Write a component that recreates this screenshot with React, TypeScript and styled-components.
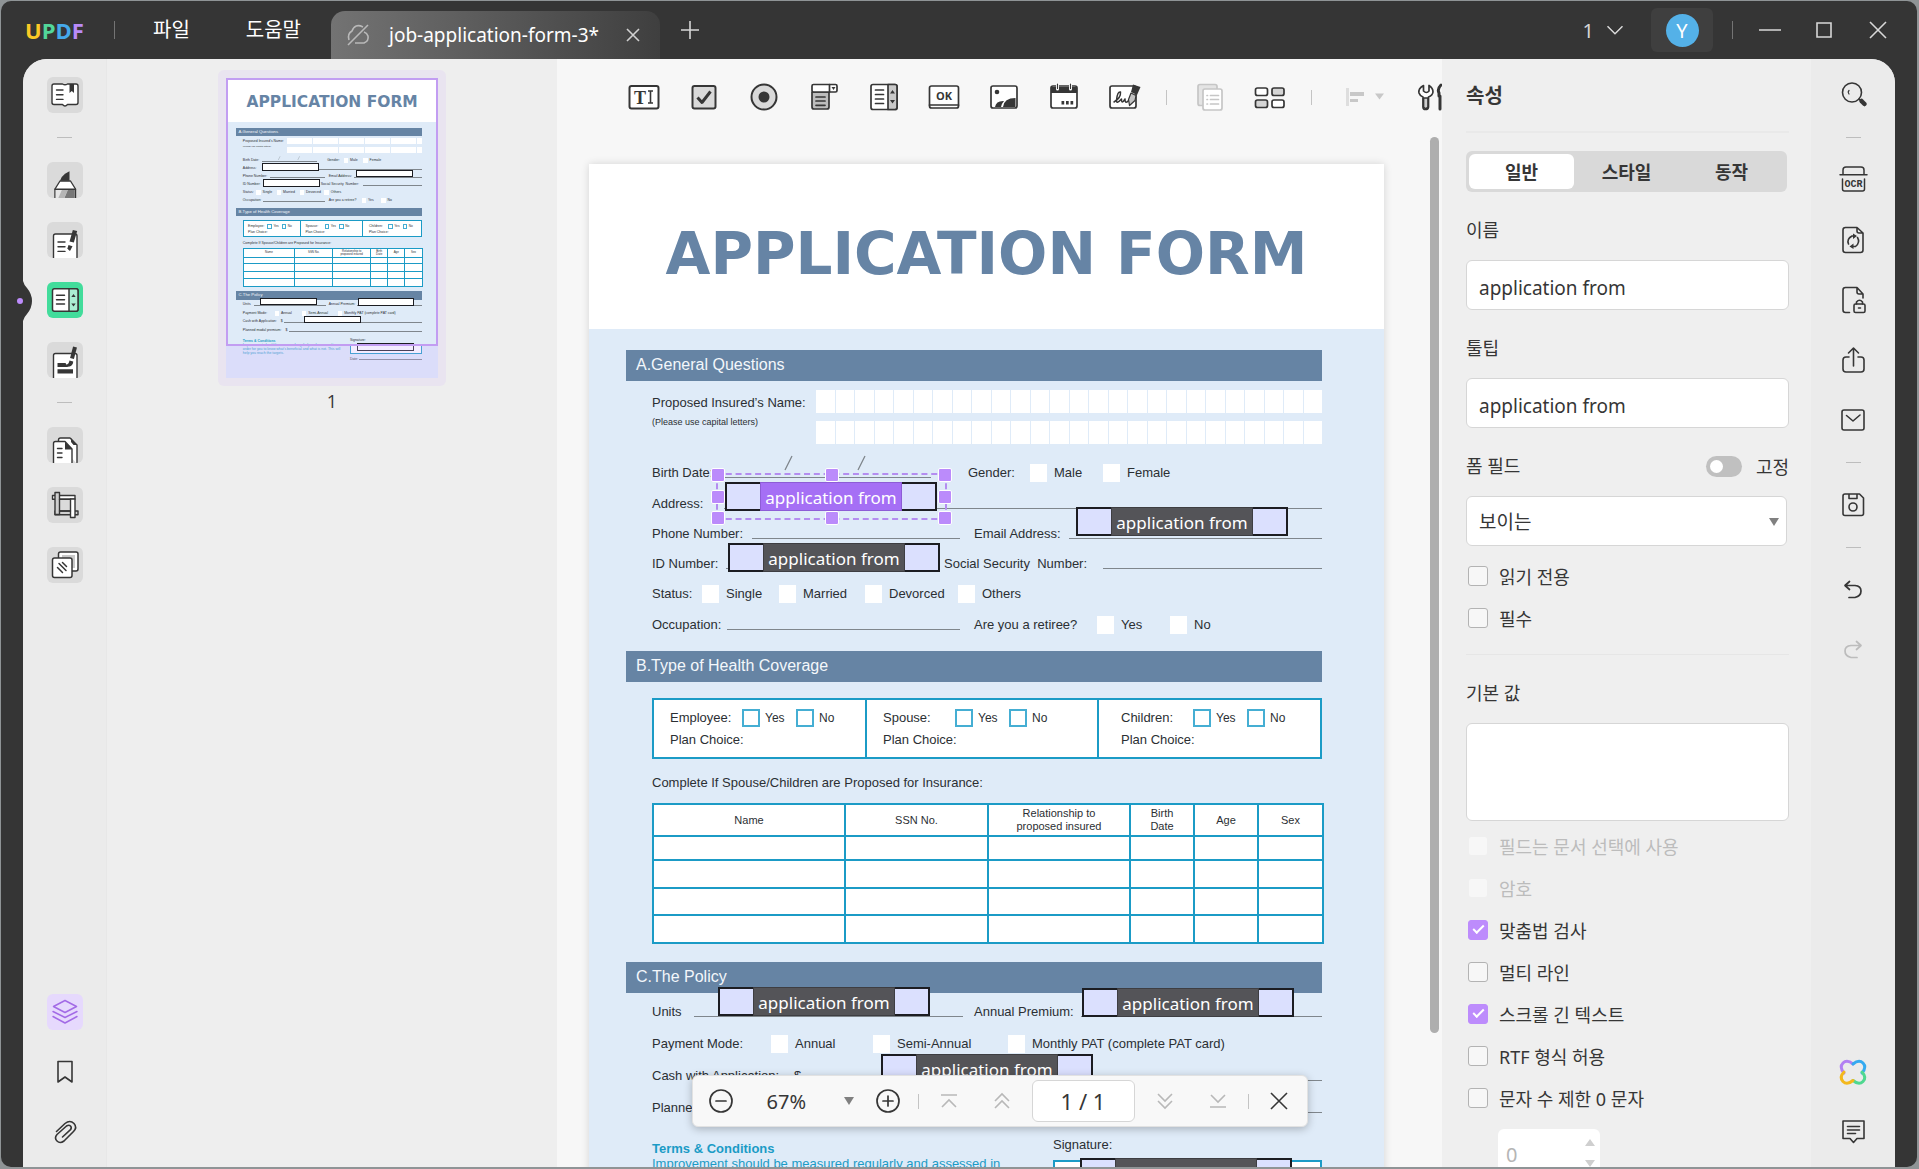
import React from 'react';
import styled, { createGlobalStyle, css } from 'styled-components';

const ui = `"Noto Sans", "Noto Sans CJK KR", sans-serif`;
const paper = `"Liberation Sans", Arial, sans-serif`;
const ink = '#363636';
const cyan = '#1b9bc6';

const Global = createGlobalStyle`
  *, *::before, *::after { box-sizing: border-box; }
  body { margin: 0; background: #8f9496; font-family: ${ui}; color: ${ink}; overflow: hidden; }
  button, input, select, textarea { font: inherit; color: inherit; margin: 0; }
  button { border: 0; padding: 0; background: none; }
  svg { display: block; flex: none; }
`;

/* ---------- shell ---------- */
const Desktop = styled.div`
  height: 100vh;
  padding: 1px 2px 2px 1px;
`;
const Window = styled.div`
  height: 100%;
  display: flex;
  flex-direction: column;
  background: #353535;
  border-radius: 10px;
  overflow: hidden;
`;
const TitleBar = styled.header`
  height: 58px;
  flex: none;
  display: flex;
  align-items: center;
  color: #fff;
  padding-right: 21px;
`;
const Logo = styled.div`
  width: 113px;
  padding-left: 24px;
  font: 700 22px/28px "Open Sans", sans-serif;
`;
const LogoLetter = styled.span<{ $c: string }>`
  color: ${p => p.$c};
`;
const TitleRule = styled.span`
  width: 1px;
  height: 18px;
  background: #747474;
`;
const Menus = styled.nav`
  display: flex;
  gap: 56px;
  padding-left: 38px;
  width: 216px;
`;
const MenuButton = styled.button`
  font-size: 20px;
  line-height: 28px;
  white-space: nowrap;
`;
const Tab = styled.div`
  align-self: flex-end;
  width: 329px;
  height: 48px;
  display: flex;
  align-items: center;
  padding: 0 15px;
  border-radius: 14px 14px 0 0;
  background: linear-gradient(90deg, #737373, #3f3f3f);
`;
const TabName = styled.span`
  flex: 1;
  padding-left: 19px;
  font-size: 19px;
  line-height: 26px;
  white-space: nowrap;
`;
const IconButton = styled.button<{ $w?: number }>`
  width: ${p => p.$w ?? 36}px;
  height: 36px;
  flex: none;
  display: grid;
  place-items: center;
`;
const TabClose = styled(IconButton)`
  width: 24px;
  height: 24px;
`;
const Spacer = styled.div`
  flex: 1;
`;
const Count = styled.button`
  display: flex;
  align-items: center;
  gap: 12px;
  font-size: 20px;
  color: #d5d5d5;
  margin-right: 27px;
`;
const Account = styled.button`
  width: 62px;
  height: 44px;
  border-radius: 6px;
  display: grid;
  place-items: center;
  background: #3f3f3f;
  margin-right: 19px;
`;
const Avatar = styled.span`
  width: 33px;
  height: 33px;
  border-radius: 50%;
  background: #54b1e8;
  font-size: 20px;
  line-height: 33px;
  color: #fff;
`;
const WindowButtons = styled.div`
  display: flex;
  gap: 18px;
  padding-left: 19px;
`;
const Frame = styled.div`
  flex: 1;
  min-height: 0;
  padding: 0 22px;
  position: relative;
`;
const Notch = styled.svg`
  position: absolute;
  left: 16px;
  top: 220px;
`;
const Body = styled.main`
  height: 100%;
  display: flex;
  background: #ebebeb;
  border-radius: 24px 24px 0 0;
  overflow: hidden;
`;

/* ---------- rails ---------- */
const Rail = styled.aside`
  width: 84px;
  flex: none;
  display: flex;
  flex-direction: column;
  align-items: center;
  gap: 24px;
  padding: 18px 0 17px;
  background: #ebebeb;
`;
const LeftRail = styled(Rail)`
  border-right: 1px solid #e7e7e7;
`;
const RailRule = styled.span`
  width: 15px;
  height: 1px;
  background: #bdbdbd;
`;
const tones = { grey: '#dadada', green: '#42dc9b', violet: '#e6d9fd', none: 'transparent' };
const RailButton = styled.button<{ $tone: keyof typeof tones }>`
  width: 36px;
  height: 36px;
  flex: none;
  border-radius: 6px;
  overflow: hidden;
  background: ${p => tones[p.$tone]};
`;

/* ---------- thumbnails ---------- */
const Thumbs = styled.aside`
  width: 450px;
  flex: none;
  background: #eeeeee;
  display: flex;
  flex-direction: column;
  align-items: center;
  padding-top: 11px;
`;
const ThumbCard = styled.div`
  padding: 8px;
  background: #e9e4f0;
  border-radius: 6px;
`;
const ThumbPage = styled.div`
  position: relative;
  width: 212px;
  height: 300px;
  overflow: hidden;
`;
const Shrunk = styled.div`
  zoom: 0.267;
`;
const ViewFrame = styled.div`
  position: absolute;
  inset: 0 0 32px 0;
  border: 2px solid #c29df2;
`;
const ViewShade = styled.div`
  position: absolute;
  inset: auto 0 0 0;
  height: 32px;
  background: rgba(208, 180, 255, 0.25);
`;
const ThumbNumber = styled.div`
  font: 18px/26px "Open Sans", sans-serif;
  margin-top: 2px;
`;

/* ---------- canvas ---------- */
const Canvas = styled.section`
  position: relative;
  flex: 1;
  min-width: 0;
  display: flex;
  flex-direction: column;
  background: #f7f7f7;
  overflow: hidden;
`;
const Toolbar = styled.div`
  height: 76px;
  flex: none;
  display: flex;
  align-items: center;
  gap: 24px;
  padding-left: 69px;
  overflow: hidden;
`;
const ToolRule = styled.span`
  width: 1px;
  height: 15px;
  flex: none;
  background: #c4c4c4;
`;
const DocArea = styled.div`
  flex: 1;
  min-height: 0;
  display: flex;
  overflow: hidden;
`;
const DocScroll = styled.div`
  flex: 1;
  display: flex;
  justify-content: center;
  padding: 29px 32px 0 18px;
`;
const ScrollTrack = styled.div`
  width: 12px;
  padding-top: 2px;
`;
const ScrollThumb = styled.div`
  width: 9px;
  height: 87%;
  border-radius: 5px;
  background: #aeaeae;
`;

/* ---------- document ---------- */
const Sheet = styled.article<{ $mini?: boolean }>`
  position: relative;
  width: 795px;
  height: 1125px;
  flex: none;
  background: #dfebf8;
  font: 13px/18px ${paper};
  color: #2b2f33;
  box-shadow: ${p => (p.$mini ? 'none' : '0 0 8px rgba(0, 0, 0, 0.14)')};
`;
const SheetTitle = styled.h1`
  margin: 0;
  height: 165px;
  background: #fff;
  color: #6684a5;
  text-align: center;
  font: 700 58px/180px "DejaVu Sans", sans-serif;
  white-space: nowrap;
`;
const SheetBody = styled.div`
  padding: 21px 62px 0 37px;
`;
const Band = styled.h2`
  margin: 0;
  height: 31px;
  padding-left: 10px;
  background: #6684a4;
  color: #f3f7fb;
  font: 16px/30px ${paper};
`;
const Block = styled.div<{ $top: number; $bottom?: number }>`
  padding: ${p => p.$top}px 0 ${p => p.$bottom ?? 0}px 26px;
`;
const NameBlock = styled.div`
  display: grid;
  grid-template-columns: 164px 1fr;
  margin-bottom: 13px;
`;
const NameLabel = styled.div`
  padding-top: 4px;
`;
const Hint = styled.div`
  font-size: 9px;
  line-height: 20px;
`;
const Combs = styled.div`
  display: grid;
  gap: 8px;
`;
const Comb = styled.div`
  display: flex;
  gap: 1px;
  height: 23px;
`;
const CombCell = styled.span`
  flex: 1;
  background: #fff;
`;
const Line = styled.div<{ $h?: number }>`
  display: flex;
  align-items: center;
  height: ${p => p.$h ?? 31}px;
`;
const Txt = styled.span<{ $w?: number; $small?: boolean }>`
  ${p => p.$w && css`width: ${p.$w}px;`}
  ${p => p.$small && css`font-size: 12px;`}
  flex: none;
  white-space: pre;
`;
const Blank = styled.span<{ $w?: number; $after?: number }>`
  ${p => (p.$w ? css`width: ${p.$w}px;` : css`flex: 1;`)}
  position: relative;
  height: 10px;
  margin-right: ${p => p.$after ?? 0}px;
  border-bottom: 1px solid #7f868c;
`;
const Slashes = styled.svg`
  position: absolute;
  left: 60px;
  top: -13px;
`;
const Box = styled.span`
  width: 17px;
  height: 18px;
  margin-right: 7px;
  background: #fff;
`;
const CyanBox = styled.span`
  width: 18px;
  height: 18px;
  margin-right: 5px;
  border: 2px solid #45aed3;
`;
const Coverage = styled.div`
  display: grid;
  grid-template-columns: 211px 232px 1fr;
  height: 61px;
  border: 2px solid ${cyan};
  background: #fff;
`;
const CoverCell = styled.div`
  padding: 7px 0 0 16px;
  & + & { border-left: 2px solid ${cyan}; }
  & + & + & { padding-left: 22px; }
`;
const Prompt = styled.p`
  margin: 15px 0 11px;
`;
const People = styled.table`
  width: 100%;
  table-layout: fixed;
  border-collapse: collapse;
  background: #fff;
  font-size: 11px;
  line-height: 13px;
  th, td { border: 2px solid ${cyan}; padding: 0; font-weight: 400; }
`;
const Col = styled.col<{ $w: number }>`
  width: ${p => p.$w}px;
`;
const Tr = styled.tr<{ $h: number }>`
  height: ${p => p.$h}px;
`;
const Closing = styled.div`
  display: grid;
  grid-template-columns: 401px 1fr;
`;
const Terms = styled.div`
  padding: 17px 20px 0 0;
  line-height: 15px;
  color: ${cyan};
`;
const SignCol = styled.div`
  padding-top: 12px;
`;
const SignBox = styled.div`
  height: 36px;
  margin: 6px 0 4px;
  border: 2px solid ${cyan};
  background: #fff;
`;

/* form fields sit anywhere on the sheet */
const FieldShell = styled.button<{ $x: number; $y: number; $mini?: boolean }>`
  position: absolute;
  left: ${p => p.$x}px;
  top: ${p => p.$y}px;
  width: 212px;
  height: 29px;
  display: flex;
  justify-content: center;
  border: 2px solid #1c1d22;
  background: ${p => (p.$mini ? '#fff' : '#dbe0fe')};
`;
const FieldName = styled.span<{ $on?: boolean }>`
  width: 142px;
  height: 29px;
  margin-top: -2px;
  background: ${p => (p.$on ? '#a56ff5' : '#545458')};
  border: 1px solid ${p => (p.$on ? '#8d5cd6' : '#3e3e42')};
  color: #fff;
  font: 17px/29px ${ui};
  overflow: hidden;
  white-space: nowrap;
`;
const Selection = styled.div`
  position: absolute;
  left: 127px;
  top: 309px;
  width: 231px;
  height: 47px;
  border: 2px dashed #b48df0;
`;
const Handle = styled.i<{ $c: number; $r: number }>`
  position: absolute;
  left: ${p => p.$c * 50}%;
  top: ${p => p.$r * 50}%;
  width: 14px;
  height: 14px;
  margin: -7px;
  border: 1px solid #fff;
  border-radius: 2px;
  background: #bb8bfb;
`;

/* ---------- zoom bar ---------- */
const ZoomBar = styled.div`
  position: absolute;
  left: 50%;
  bottom: 40px;
  transform: translateX(-50%);
  width: 616px;
  height: 52px;
  display: flex;
  align-items: center;
  gap: 12px;
  padding: 0 10px;
  border-radius: 6px;
  border: 1px solid #e2e2e2;
  background: #f8f8f8;
  box-shadow: 0 2px 8px rgba(0, 0, 0, 0.25);
`;
const ZoomValue = styled.button`
  display: flex;
  align-items: center;
  justify-content: space-between;
  width: 87px;
  margin: 0 4px 0 16px;
  font-size: 20px;
`;
const NavPair = styled.div`
  display: flex;
  gap: 17px;
`;
const PageInput = styled.input`
  width: 103px;
  height: 42px;
  border: 1px solid #d6d6d6;
  border-radius: 6px;
  background: #fff;
  text-align: center;
  font-size: 22px;
`;

/* ---------- properties ---------- */
const Props = styled.aside`
  width: 369px;
  flex: none;
  padding: 0 22px 0 24px;
  background: #efefef;
  overflow: hidden;
`;
const PropsTitle = styled.h2`
  margin: 0;
  height: 74px;
  border-bottom: 2px solid #e9e9e9;
  font: 700 20px/74px ${ui};
`;
const Segments = styled.div`
  display: flex;
  margin: 18px 2px 0 0;
  padding: 3px;
  height: 41px;
  border-radius: 6px;
  background: #d9d9d9;
`;
const Segment = styled.button<{ $on?: boolean }>`
  flex: 1;
  border-radius: 6px;
  background: ${p => (p.$on ? '#fff' : 'transparent')};
  font-size: 18px;
  line-height: 30px;
  font-weight: 700;
`;
const Field = styled.div`
  margin-top: 25px;
`;
const FieldHead = styled.div`
  display: flex;
  align-items: center;
  justify-content: space-between;
  height: 26px;
  margin-bottom: 17px;
`;
const Label = styled.label`
  font-size: 18px;
  line-height: 26px;
`;
const control = css`
  width: 100%;
  border: 1px solid #d6d6d6;
  border-radius: 6px;
  background: #fff;
  padding: 6px 12px 0;
  font-size: 19px;
  display: block;
  outline: none;
`;
const Input = styled.input`
  ${control}
  height: 50px;
`;
const Area = styled.textarea`
  ${control}
  height: 98px;
  resize: none;
`;
const SelectWrap = styled.div`
  position: relative;
  margin-right: 2px;
`;
const Select = styled.select`
  ${control}
  height: 50px;
  appearance: none;
  padding-top: 2px;
`;
const SelectArrow = styled.svg`
  position: absolute;
  right: 8px;
  top: 22px;
`;
const SwitchLabel = styled.label`
  display: flex;
  align-items: center;
  gap: 14px;
  font-size: 18px;
`;
const Switch = styled.input`
  appearance: none;
  width: 36px;
  height: 21px;
  border-radius: 11px;
  background: #c0c0c0;
  padding: 4px;
  &::after {
    content: '';
    display: block;
    width: 13px;
    height: 13px;
    border-radius: 50%;
    background: #fff;
  }
`;
const Checks = styled.div<{ $top: number }>`
  padding: ${p => p.$top}px 0 0 2px;
`;
const CheckRow = styled.label<{ $off?: boolean }>`
  display: flex;
  align-items: center;
  gap: 11px;
  height: 42px;
  font-size: 18px;
  white-space: nowrap;
  color: ${p => (p.$off ? '#bcbcbc' : ink)};
`;
const Check = styled.input`
  appearance: none;
  width: 20px;
  height: 20px;
  flex: none;
  display: grid;
  place-items: center;
  border: 1px solid #b3b3b3;
  border-radius: 3px;
  background: #f7f7f7;
  &:disabled { border-color: #efefef; }
  &:checked { background: #bd8cfc; border-color: #bd8cfc; }
  &:checked::after {
    content: '';
    width: 11px;
    height: 6px;
    margin-bottom: 4px;
    border: solid #fff;
    border-width: 0 0 2px 2px;
    transform: rotate(-45deg);
  }
`;
const PropsRule = styled.hr`
  margin: 15px 0 0;
  border: 0;
  border-top: 1px solid #e6e6e6;
`;
const Stepper = styled.div`
  position: relative;
  width: 102px;
  margin: 10px 0 0 32px;
`;
const StepInput = styled.input`
  width: 102px;
  height: 50px;
  border: 0;
  border-radius: 6px;
  padding: 0 8px;
  background: #fff;
  color: #b5b5b5;
  font-size: 20px;
  appearance: textfield;
  &::-webkit-inner-spin-button { display: none; }
`;
const StepArrows = styled.svg`
  position: absolute;
  right: 5px;
  top: 10px;
`;

/* ---------- icons: every one is drawn on a 36px grid ---------- */
const Icon = ({ children, c = ink, w = 2 }: { children: React.ReactNode; c?: string; w?: number }) => (
  <svg width="36" height="36" viewBox="0 0 36 36" fill="none" stroke={c} strokeWidth={w} strokeLinejoin="round" strokeLinecap="round" aria-hidden="true">
    {children}
  </svg>
);
const solid = { fill: ink, stroke: 'none' };

const Reader = () => (
  <Icon w={1.4}>
    <path d="M7 7h8.500q2.500 1.500 5 0H29q2 0 2 2v16.500q0 2-2 2h-8.500q-2.500 3-5 0H7q-2 0-2-2V9q0-2 2-2z" fill="#fff" />
    <path d="M9.500 13h6.500M9.500 17.700h6.500M9.500 22.400h6.500" />
    <path d="M22.500 7h4.500v9l-2.200-2-2.300 2z" {...solid} />
  </Icon>
);
const Marker = () => (
  <Icon w={1.4}>
    <path d="M8 36v-9l5-8h10.500l5 8v9" fill="#fff" />
    <path d="M8.700 27.500h6.300l-4 9H8.700z" fill="#e6e6e6" stroke="none" />
    <path d="M15 27.500h6l-4 9h-6z" fill="#b5b5b5" stroke="none" />
    <path d="M21 27.500h6.800V37H17z" fill="#777" stroke="none" />
    <path d="M8 27.200h20.500" />
    <path d="M13 18.800q1.500-4.500 5-7L22.500 9.300v9.500z" {...solid} />
  </Icon>
);
const EditPage = () => (
  <Icon w={1.4}>
    <path d="M6.500 37V14q0-2 2-2H28q2 0 2 2v23" fill="#fff" />
    <path d="M11 20h7M11 24.700h7M11 29.400h7" />
    <path d="M28 8.500L24.700 20" strokeWidth="4.500" strokeLinecap="butt" />
    <path d="M21.500 23l4 1.200-2.500 4.800q-2-1-2.500-2.800z" {...solid} />
  </Icon>
);
const FormPage = () => (
  <Icon w={1.5}>
    <rect x="5.500" y="6.700" width="25.500" height="22.600" rx="2" fill="#fff" />
    <path d="M22 6.700h7q2 0 2 2v18.600q0 2-2 2h-7z" fill="#abeed3" />
    <path d="M9.500 13.300h8M9.500 17.700h8M9.500 22h8" />
    <path d="M24.300 15l2.200-3 2.200 3zM24.300 21.500l2.200 3 2.200-3z" {...solid} />
  </Icon>
);
const Redact = () => (
  <Icon w={1.4}>
    <path d="M6.500 37V13.500q0-2 2-2H28q2 0 2 2v23" fill="#fff" />
    <path d="M10.500 21h8q1 3 4 4h-12zM10.500 27.200h15.500v4.300H10.500z" {...solid} />
    <path d="M28 5l-3 11.500" strokeWidth="4" strokeLinecap="butt" />
    <path d="M22.500 18.500l3.700 1q0 3.500-3.500 5-2.500 0-3.700-1.500 3-1 3.500-4.500z" {...solid} />
  </Icon>
);
const Pages = () => (
  <Icon w={1.4}>
    <path d="M11.500 16v-3q0-2 2-2h9.500l7 7v19" fill="#fff" />
    <path d="M6.500 37V16.500q0-2 2-2H18l7 7.500v15" fill="#fff" />
    <path d="M18 14.500l7 8h-7zM24 11l6 7h-3.500L24 15z" {...solid} />
    <path d="M10.500 21.500h4.500M10.500 26h4.500M10.500 30.500h4.500" />
  </Icon>
);
const CropPage = () => (
  <Icon w={1.4}>
    <path d="M5.500 8.500h22.500v3.700H5.500z" fill="#fff" />
    <path d="M8 24h23v3.700H8z" fill="#cfcfcf" />
    <path d="M23.500 12h4.500v18.500h-4.500z" fill="#fff" />
    <path d="M8 5.500h4.500v22H8z" fill="#cfcfcf" />
    <path d="M12.500 12.200h11M12.500 24h11" />
  </Icon>
);
const Compare = () => (
  <Icon w={1.5}>
    <rect x="11.500" y="5" width="19.500" height="19" rx="2" fill="#fff" />
    <rect x="15" y="8" width="13" height="13" fill="#c9c9c9" stroke="none" />
    <rect x="5.500" y="11" width="19.500" height="19.500" rx="2" fill="#fff" />
    <path d="M10.500 20.500l5 5M12 16.500l7 7M15.500 15.500l4 4" />
  </Icon>
);
const Layers = () => (
  <Icon w={1.5} c="#a36be6">
    <path d="M18 6.500l11.500 6L18 18.500 6.500 12.500zM6 17.500l12 6 12-6M6 22.500l12 6.500 12-6.500" />
  </Icon>
);
const Bookmark = () => <Icon w={1.6}><path d="M11 7.500h14v20.500l-7-5-7 5z" /></Icon>;
const Clip = () => (
  <Icon w={1.6}>
    <path d="M9.500 17.500l8.500-8q5-4 9 0 3.500 4-.5 8L17 27q-4 3-7 0t0-6.500L19.500 12q2.500-1.500 4 0t0 3.700L15.500 23" />
  </Icon>
);
const leftTop: [string, () => React.ReactElement, keyof typeof tones][] = [
  ['주석', Marker, 'grey'], ['편집', EditPage, 'grey'], ['양식', FormPage, 'green'], ['가리기', Redact, 'grey'],
];
const leftMid: [string, () => React.ReactElement][] = [['페이지 구성', Pages], ['페이지 자르기', CropPage], ['비교', Compare]];

const SearchIcon = () => (
  <Icon w={1.6}>
    <circle cx="17" cy="15.500" r="9.500" />
    <path d="M14 13.500q-1.500 1.500 0 3.500" strokeWidth="1.200" />
    <path d="M24 22l2 2" /><path d="M26.500 24l3 3" strokeWidth="4.500" />
  </Icon>
);
const OcrText = styled.text`
  font: 700 10px "Liberation Mono", monospace;
`;
const Ocr = () => (
  <Icon w={1.5}>
    <path d="M8 12.500V8q0-3 3-3h15q3 0 3 3v4.500M5 12.700h27M7.500 17v10q0 2 2 2h18q2 0 2-2V17" />
    <OcrText x="18.500" y="25" textAnchor="middle" fill={ink} stroke="none">OCR</OcrText>
  </Icon>
);
const Convert = () => (
  <Icon w={1.6}>
    <path d="M22 5.500H10.500Q8 5.500 8 8v20q0 2.500 2.500 2.500h15q2.500 0 2.500-2.500V11zM22 5.500V9q0 2 2 2h4" />
    <path d="M13.500 22q-2-5 3.500-8h2M22.500 15.500q3 5-2 9h-3" />
    <path d="M18 11.500l4 2.500-4 3zM18.500 21.500l-4 3 4 2.500z" {...solid} />
  </Icon>
);
const Lock = () => (
  <Icon w={1.6}>
    <path d="M14.500 30.500h-4Q8 30.500 8 28V8q0-2.500 2.500-2.500H22l6 6.500v4M22 5.500V10q0 2 2 2h4" />
    <rect x="19" y="22" width="11" height="8.500" rx="1.500" />
    <path d="M21.500 22v-2q3-3.500 6 0v2M23.500 26h2" />
  </Icon>
);
const Share = () => (
  <Icon w={1.6}>
    <path d="M14 15h-3q-3 0-3 3v9q0 3 3 3h15q3 0 3-3v-9q0-3-3-3h-3M18.500 24V6.500M13.500 11l5-5 5 5" />
  </Icon>
);
const Mail = () => <Icon w={1.6}><rect x="7" y="8" width="22" height="20" rx="2" /><path d="M11.500 13.500l6.500 5.500 7-6" /></Icon>;
const Save = () => (
  <Icon w={1.6}>
    <path d="M10 7h14.500l4 4v15.500q0 2-2 2H10q-2 0-2-2V9q0-2 2-2zM14 7v4.500h8V7" /><circle cx="18" cy="20" r="4" />
  </Icon>
);
const Undo = () => <Icon w={1.7}><path d="M14.500 9.500L10 13.500l4.500 4M10.500 13.500H20q6 .5 6 5.500t-6 6.500h-6" /></Icon>;
const Redo = () => <Icon w={1.7} c="#bcbcbc"><path d="M21.500 9.500l4.500 4-4.500 4M25.500 13.500H16q-6 .5-6 5.500t6 6.500h6" /></Icon>;
const Clover = () => (
  <Icon w={3}>
    <path d="M9 19Q4 13 8 9q4-4 10 1" stroke="#b280f2" />
    <path d="M18 10q6-5 10-1 4 4-1 10" stroke="#35aaf0" />
    <path d="M27 18q5 5.500 1 9.500-4 4-10-1" stroke="#4fd890" />
    <path d="M18 26.500q-6 5-10 1Q4 23 9 18" stroke="#f3b81d" />
  </Icon>
);
const Comment = () => <Icon w={1.6}><path d="M8 7h21v17.500h-7l-3.500 4-3.500-4H8zM12.500 12.500h12M12.500 16h12M12.500 19.500h8" /></Icon>;

/* toolbar icons */
const Glyph = styled.text<{ $serif?: boolean }>`
  font: 700 ${p => (p.$serif ? '18px "Liberation Serif", serif' : '11px "Open Sans", sans-serif')};
`;
const TextTool = () => (
  <Icon><rect x="3.500" y="7" width="29" height="22.500" rx="2" fill="#fff" />
    <Glyph $serif x="14" y="24.500" textAnchor="middle" fill={ink} stroke="none">T</Glyph>
    <path d="M24.500 12.500v11M22 12h5M22 24h5" strokeWidth="1.600" strokeLinecap="butt" />
  </Icon>
);
const CheckTool = () => <Icon><rect x="6.500" y="7" width="23" height="22.500" rx="2" fill="#d9d9d9" /><path d="M11.500 18.500l4.500 5 8.500-11" strokeWidth="3" strokeLinecap="butt" /></Icon>;
const RadioTool = () => <Icon><circle cx="18" cy="18" r="12.500" fill="#d9d9d9" /><circle cx="18" cy="18" r="5.500" {...solid} /></Icon>;
const ComboTool = () => (
  <Icon w={1.7}><path d="M6 13h17v15q0 2-2 2H8q-2 0-2-2z" fill="#bdbdbd" />
    <rect x="6" y="5.500" width="25" height="7.500" rx="1.500" fill="#fff" /><path d="M23.500 5.500v7.500M10 18h9M10 22h9M10 26.300h9" />
    <path d="M25.500 8h4l-2 3z" {...solid} />
  </Icon>
);
const ListTool = () => (
  <Icon w={1.7}><rect x="5" y="5.500" width="26" height="25" rx="2" fill="#fff" /><path d="M22 5.500h7q2 0 2 2v21q0 2-2 2h-7z" fill="#c9c9c9" />
    <path d="M9.500 11h8M9.500 15.500h8M9.500 20h8M9.500 24.500h8" /><path d="M24 14.500l2.500-3.500 2.500 3.500zM24 21l2.500 3.500L29 21z" {...solid} />
  </Icon>
);
const OkTool = () => (
  <Icon w={1.7}><rect x="3.500" y="7" width="29" height="22" rx="2" fill="#fff" /><path d="M3.500 26h29" />
    <Glyph x="18" y="21" textAnchor="middle" fill={ink} stroke="none">OK</Glyph>
  </Icon>
);
const ImageTool = () => (
  <Icon w={1.7}><rect x="5" y="7" width="26" height="22" rx="2" fill="#fff" /><circle cx="11" cy="13" r="2.300" {...solid} />
    <path d="M9 28q1-6 8-6l1 0q-2 2-3 6zM17 28q1-9 12.500-9v9z" {...solid} />
  </Icon>
);
const DateTool = () => (
  <Icon w={1.7}><rect x="5" y="7" width="26" height="22" rx="2" fill="#fff" /><path d="M5 8h26v6H5z" {...solid} />
    <path d="M11.500 5v5M24.500 5v5" stroke="#fff" strokeWidth="3" /><path d="M11.500 5v4.500M24.500 5v4.500" strokeWidth="1.200" />
    <path d="M15.500 22h2.700v3.500h-2.700zM20 22h2.700v3.500H20zM24.500 22h2.700v3.500h-2.700z" {...solid} />
  </Icon>
);
const SignTool = () => (
  <Icon w={1.7}><rect x="4" y="7" width="26" height="22" rx="2" fill="#fff" />
    <path d="M8 23q7-4 6.500-10-3-1-4 8-.5 5 5-1 0 6 3.500 0 0 6 4 1" strokeWidth="1.500" />
    <path d="M25 14l5 2.500-1 5-5.500 5-1-6z" fill="#c4c4c4" strokeWidth="1.200" /><path d="M27 5.500l7.500 2.500-3.500 8-6-3z" {...solid} />
  </Icon>
);
const CopyTool = () => (
  <Icon w={1.7} c="#c6c6c6"><rect x="7" y="5.500" width="19" height="21" rx="2" fill="#e4e4e4" /><rect x="12" y="10" width="19" height="21" rx="2" fill="#fff" />
    <path d="M19.500 16.500h8M19.500 20.500h8M19.500 25h8M16 16.500h.5M16 20.500h.5M16 25h.5" />
  </Icon>
);
const GridTool = () => (
  <Icon w={1.7}><rect x="4.500" y="9" width="12" height="7.500" rx="2" fill="#fff" /><rect x="21" y="9" width="12" height="7.500" rx="2" fill="#d5d5d5" />
    <rect x="4.500" y="21" width="12" height="7.500" rx="2" fill="#d5d5d5" /><rect x="21" y="21" width="12" height="7.500" rx="2" fill="#fff" />
  </Icon>
);
const AlignTool = () => (
  <svg width="56" height="36" viewBox="0 0 56 36" fill="#c8c8c8" aria-hidden="true">
    <rect x="10" y="9" width="3" height="18" fill="#dedede" /><rect x="14" y="13" width="14" height="4" /><rect x="14" y="20" width="8" height="3" /><path d="M39 14.500h9l-4.500 6z" />
  </svg>
);
const Wrench = () => (
  <Icon w={1.7}><path d="M7.500 6.500Q2 9.500 3 14q1 3 4 4v10q0 2.500 2.500 2.500T12.500 28V18q4-1.500 4.500-5 0-4-4-6.500V12q-2.500 3-5.500 0z" fill="#fff" />
    <path d="M7.500 19h4.500v9q-2 3-4.500 0z" fill="#cfcfcf" /><path d="M25 6q-4 4-2 8v3M24 17v13" strokeWidth="3" />
  </Icon>
);
const tools: [string, () => React.ReactElement][] = [
  ['텍스트 필드', TextTool], ['체크 박스', CheckTool], ['라디오 버튼', RadioTool], ['드롭다운', ComboTool], ['목록 상자', ListTool],
  ['버튼', OkTool], ['이미지', ImageTool], ['날짜', DateTool], ['서명', SignTool],
];

/* ---------- document pieces ---------- */
const fields = [
  { x: 136, y: 318, on: true }, { x: 487, y: 343 }, { x: 139, y: 379 }, { x: 129, y: 823 },
  { x: 493, y: 824 }, { x: 292, y: 890 }, { x: 491, y: 994 },
];
const range = (n: number) => Array.from({ length: n }, (_, i) => i);

const Option = ({ text, w }: { text: string; w?: number }) => (<><Box /><Txt $w={w}>{text}</Txt></>);
const Cover = ({ who }: { who: string }) => (
  <CoverCell>
    <Line $h={22}>
      <Txt $w={72}>{who}</Txt>
      <CyanBox /><Txt $w={31} $small>Yes</Txt>
      <CyanBox /><Txt $small>No</Txt>
    </Line>
    <Line $h={22}><Txt>Plan Choice:</Txt></Line>
  </CoverCell>
);

const Document = ({ mini }: { mini?: boolean }) => (
  <Sheet $mini={mini}>
    <SheetTitle>APPLICATION FORM</SheetTitle>
    <SheetBody>
      <Band>A.General Questions</Band>
      <Block $top={9} $bottom={11}>
        <NameBlock>
          <NameLabel>Proposed Insured’s Name:<Hint>(Please use capital letters)</Hint></NameLabel>
          <Combs>{range(2).map(r => <Comb key={r}>{range(26).map(c => <CombCell key={c} />)}</Comb>)}</Combs>
        </NameBlock>
        <Line>
          <Txt $w={72}>Birth Date:</Txt>
          <Blank $w={207} $after={37}>
            <Slashes width="84" height="16" stroke="#7f868c" strokeWidth="1.300"><path d="M1 15L8 1M74 15L81 1" /></Slashes>
          </Blank>
          <Txt $w={62}>Gender:</Txt><Option text="Male" w={49} /><Option text="Female" />
        </Line>
        <Line><Txt $w={72}>Address:</Txt><Blank /></Line>
        <Line $h={30}><Txt $w={100}>Phone Number:</Txt><Blank $w={208} $after={14} /><Txt $w={95}>Email Address:</Txt><Blank /></Line>
        <Line $h={30}><Txt $w={74}>ID Number:</Txt><Blank $w={210} $after={8} /><Txt $w={159}>{'Social Security  Number:'}</Txt><Blank /></Line>
        <Line $h={30}>
          <Txt $w={50}>Status:</Txt><Option text="Single" w={53} /><Option text="Married" w={62} /><Option text="Devorced" w={69} /><Option text="Others" />
        </Line>
        <Line><Txt $w={75}>Occupation:</Txt><Blank $w={233} $after={14} /><Txt $w={123}>Are you a retiree?</Txt><Option text="Yes" w={49} /><Option text="No" /></Line>
      </Block>
      <Band>B.Type of Health Coverage</Band>
      <Block $top={16} $bottom={18}>
        <Coverage><Cover who="Employee:" /><Cover who="Spouse:" /><Cover who="Children:" /></Coverage>
        <Prompt>Complete If Spouse/Children are Proposed for Insurance:</Prompt>
        <People>
          <colgroup>{[192, 143, 142, 64, 64, 65].map((w, i) => <Col key={i} $w={w} />)}</colgroup>
          <thead>
            <Tr $h={32}><th>Name</th><th>SSN No.</th><th>Relationship to<br />proposed insured</th><th>Birth<br />Date</th><th>Age</th><th>Sex</th></Tr>
          </thead>
          <tbody>{[24, 28, 27, 28].map((h, i) => <Tr key={i} $h={h}>{range(6).map(c => <td key={c} />)}</Tr>)}</tbody>
        </People>
      </Block>
      <Band>C.The Policy</Band>
      <Block $top={3}>
        <Line $h={32}><Txt $w={42}>Units</Txt><Blank $w={269} $after={11} /><Txt $w={107}>Annual Premium:</Txt><Blank /></Line>
        <Line $h={32}><Txt $w={119}>Payment Mode:</Txt><Option text="Annual" w={78} /><Option text="Semi-Annual" w={111} /><Option text="Monthly PAT (complete PAT card)" /></Line>
        <Line $h={32}><Txt $w={142}>Cash with Application:</Txt><Txt $w={12}>$</Txt><Blank /></Line>
        <Line $h={32}><Txt $w={160}>Planned modal premium:</Txt><Txt $w={12}>$</Txt><Blank /></Line>
        <Closing>
          <Terms><b>Terms &amp; Conditions</b><br />Improvement should be measured regularly and assessed in order for you to know what’s beneficial and what is not. This will help you reach the targets.</Terms>
          <SignCol>Signature:<SignBox /><Line><Txt $w={36}>Date:</Txt><Blank /></Line></SignCol>
        </Closing>
      </Block>
    </SheetBody>
    {fields.map((f, i) => (
      <FieldShell key={i} type="button" $x={f.x} $y={f.y} $mini={mini}>
        {!mini && <FieldName $on={f.on}>application from</FieldName>}
      </FieldShell>
    ))}
    {!mini && (
      <Selection>
        {range(9).filter(i => i !== 4).map(i => <Handle key={i} $c={i % 3} $r={Math.floor(i / 3)} />)}
      </Selection>
    )}
  </Sheet>
);

const Tiny = ({ d, c = '#d8d8d8', s = 24, w = 1.6 }: { d: string; c?: string; s?: number; w?: number }) => (
  <svg width={s} height={s} viewBox="0 0 24 24" fill="none" stroke={c} strokeWidth={w} aria-hidden="true"><path d={d} /></svg>
);
const Down = () => <svg width="10" height="8" aria-hidden="true"><path d="M0 0h10L5 8z" fill="#808080" /></svg>;

const options: [string, boolean, boolean][] = [
  ['필드는 문서 선택에 사용', false, true], ['암호', false, true], ['맞춤법 검사', true, false], ['멀티 라인', false, false],
  ['스크롤 긴 텍스트', true, false], ['RTF 형식 허용', false, false], ['문자 수 제한 0 문자', false, false],
];
const CheckOption = ({ text, on, off }: { text: string; on?: boolean; off?: boolean }) => (
  <CheckRow $off={off}><Check type="checkbox" defaultChecked={on} disabled={off} />{text}</CheckRow>
);
const RailItem = ({ name, tone = 'none', icon: I }: { name: string; tone?: keyof typeof tones; icon: () => React.ReactElement }) => (
  <RailButton type="button" aria-label={name} $tone={tone}><I /></RailButton>
);

export default function App() {
  return (
    <Desktop>
      <Global />
      <Window>
        <TitleBar>
          <Logo><LogoLetter $c="#fbc926">U</LogoLetter><LogoLetter $c="#52d69a">P</LogoLetter><LogoLetter $c="#45a9ea">D</LogoLetter><LogoLetter $c="#b98bf8">F</LogoLetter></Logo>
          <TitleRule />
          <Menus>
            <MenuButton type="button">파일</MenuButton>
            <MenuButton type="button">도움말</MenuButton>
          </Menus>
          <Tab>
            <Tiny c="#b9b9b9" d="M2 22L22 2M17 4Q9 0 6 8q-5 3-3 9M9 20h9q5-2 4-7-1-3-4-4" />
            <TabName>job-application-form-3*</TabName>
            <TabClose type="button" aria-label="탭 닫기"><Tiny c="#d0d0d0" d="M6 6l12 12M18 6L6 18" /></TabClose>
          </Tab>
          <IconButton type="button" $w={60} aria-label="새 탭"><Tiny c="#d8d8d8" d="M12 3v18M3 12h18" /></IconButton>
          <Spacer />
          <Count type="button">1<Tiny s={18} w={2} d="M2 7l10 10L22 7" /></Count>
          <Account type="button" aria-label="계정"><Avatar>Y</Avatar></Account>
          <TitleRule />
          <WindowButtons>
            <IconButton type="button" aria-label="최소화"><Tiny d="M1 12h22" /></IconButton>
            <IconButton type="button" aria-label="최대화"><Tiny d="M5 5h14v14H5z" /></IconButton>
            <IconButton type="button" aria-label="닫기"><Tiny d="M4 4l16 16M20 4L4 20" /></IconButton>
          </WindowButtons>
        </TitleBar>
        <Frame>
          <Body>
            <LeftRail>
              <RailItem name="읽기" tone="grey" icon={Reader} />
              <RailRule />
              {leftTop.map(([n, I, t]) => <RailItem key={n} name={n} tone={t} icon={I} />)}
              <RailRule />
              {leftMid.map(([n, I]) => <RailItem key={n} name={n} tone="grey" icon={I} />)}
              <Spacer />
              <RailItem name="축소판" tone="violet" icon={Layers} />
              <RailItem name="책갈피" icon={Bookmark} />
              <RailItem name="첨부 파일" icon={Clip} />
            </LeftRail>
            <Thumbs>
              <ThumbCard>
                <ThumbPage>
                  <Shrunk aria-hidden="true" inert><Document mini /></Shrunk>
                  <ViewShade /><ViewFrame />
                </ThumbPage>
              </ThumbCard>
              <ThumbNumber>1</ThumbNumber>
            </Thumbs>
            <Canvas>
              <Toolbar>
                {tools.map(([n, I]) => <IconButton key={n} type="button" aria-label={n}><I /></IconButton>)}
                <ToolRule />
                <IconButton type="button" aria-label="복사"><CopyTool /></IconButton>
                <IconButton type="button" aria-label="필드 배열"><GridTool /></IconButton>
                <ToolRule />
                <IconButton type="button" $w={56} aria-label="정렬"><AlignTool /></IconButton>
                <IconButton type="button" aria-label="도구"><Wrench /></IconButton>
              </Toolbar>
              <DocArea>
                <DocScroll><Document /></DocScroll>
                <ScrollTrack><ScrollThumb /></ScrollTrack>
              </DocArea>
              <ZoomBar>
                <IconButton type="button" aria-label="축소"><Icon w={1.7}><circle cx="18" cy="18" r="11" /><path d="M13 18h10" /></Icon></IconButton>
                <ZoomValue type="button">67%<Down /></ZoomValue>
                <IconButton type="button" aria-label="확대"><Icon w={1.7}><circle cx="18" cy="18" r="11" /><path d="M13 18h10M18 13v10" /></Icon></IconButton>
                <ToolRule />
                <NavPair>
                  <IconButton type="button" aria-label="첫 페이지"><Tiny c="#b8b8b8" d="M4 6h16M5 18l7-7 7 7" /></IconButton>
                  <IconButton type="button" aria-label="이전 페이지"><Tiny c="#b8b8b8" d="M5 12l7-7 7 7M5 19l7-7 7 7" /></IconButton>
                </NavPair>
                <PageInput aria-label="페이지" defaultValue="1 / 1" />
                <NavPair>
                  <IconButton type="button" aria-label="다음 페이지"><Tiny c="#b8b8b8" d="M5 5l7 7 7-7M5 12l7 7 7-7" /></IconButton>
                  <IconButton type="button" aria-label="마지막 페이지"><Tiny c="#b8b8b8" d="M4 18h16M5 6l7 7 7-7" /></IconButton>
                </NavPair>
                <ToolRule />
                <IconButton type="button" aria-label="막대 닫기"><Tiny c={ink} d="M4 4l16 16M20 4L4 20" /></IconButton>
              </ZoomBar>
            </Canvas>
            <Props>
              <PropsTitle>속성</PropsTitle>
              <Segments>
                <Segment type="button" $on>일반</Segment>
                <Segment type="button">스타일</Segment>
                <Segment type="button">동작</Segment>
              </Segments>
              <Field>
                <FieldHead><Label htmlFor="f-name">이름</Label></FieldHead>
                <Input id="f-name" defaultValue="application from" />
              </Field>
              <Field>
                <FieldHead><Label htmlFor="f-tip">툴팁</Label></FieldHead>
                <Input id="f-tip" defaultValue="application from" />
              </Field>
              <Field>
                <FieldHead>
                  <Label htmlFor="f-vis">폼 필드</Label>
                  <SwitchLabel><Switch type="checkbox" role="switch" />고정</SwitchLabel>
                </FieldHead>
                <SelectWrap>
                  <Select id="f-vis"><option>보이는</option></Select>
                  <SelectArrow width="10" height="8" aria-hidden="true"><path d="M0 0h10L5 8z" fill="#808080" /></SelectArrow>
                </SelectWrap>
              </Field>
              <Checks $top={9}>
                <CheckOption text="읽기 전용" />
                <CheckOption text="필수" />
              </Checks>
              <PropsRule />
              <Field>
                <FieldHead><Label htmlFor="f-default">기본 값</Label></FieldHead>
                <Area id="f-default" />
              </Field>
              <Checks $top={4}>
                {options.map(([t, on, off]) => <CheckOption key={t} text={t} on={on} off={off} />)}
              </Checks>
              <Stepper>
                <StepInput type="number" aria-label="문자 수" defaultValue={0} />
                <StepArrows width="10" height="28" aria-hidden="true"><path d="M0 7h10L5 0zM0 21h10l-5 7z" fill="#cfcfcf" /></StepArrows>
              </Stepper>
            </Props>
            <Rail>
              <RailItem name="검색" icon={SearchIcon} />
              <RailRule />
              <RailItem name="OCR" icon={Ocr} />
              <RailItem name="변환" icon={Convert} />
              <RailItem name="보호" icon={Lock} />
              <RailItem name="공유" icon={Share} />
              <RailItem name="메일" icon={Mail} />
              <RailRule />
              <RailItem name="저장" icon={Save} />
              <RailRule />
              <RailItem name="실행 취소" icon={Undo} />
              <RailItem name="다시 실행" icon={Redo} />
              <Spacer />
              <RailItem name="UPDF AI" icon={Clover} />
              <RailItem name="댓글" icon={Comment} />
            </Rail>
          </Body>
          <Notch width="16" height="44" viewBox="0 0 16 44" aria-hidden="true">
            <path d="M0 2h6q1 4 4 7 5 6 5 13t-5 13q-3 3-4 7H0z" fill="#353535" />
            <circle cx="3" cy="22" r="3" fill="#bd8cfc" />
          </Notch>
        </Frame>
      </Window>
    </Desktop>
  );
}
